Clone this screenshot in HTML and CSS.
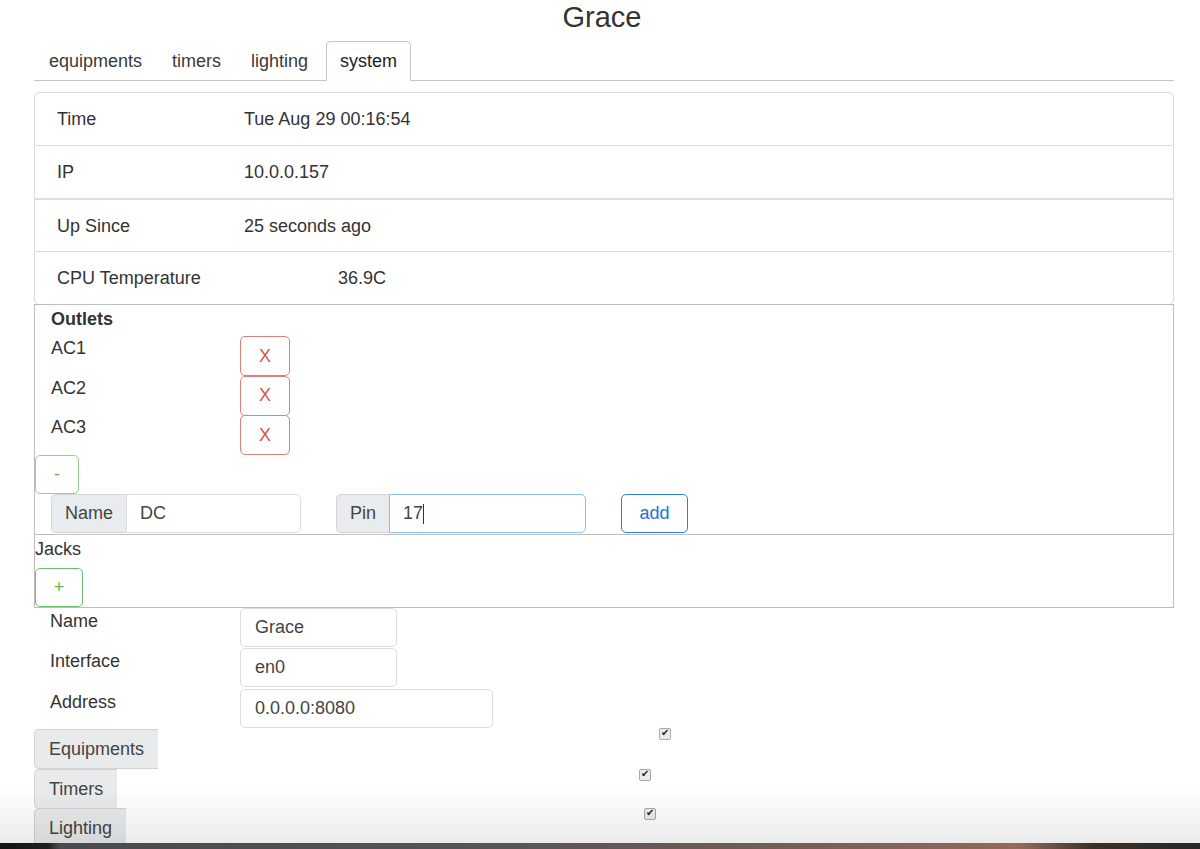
FILE: index.html
```html
<!DOCTYPE html>
<html lang="en">
<head>
    <meta charset="UTF-8">
    <meta name="viewport" content="width=device-width, initial-scale=1.0">
    <title>Grace</title>
    <link rel="stylesheet" href="styles.css">
</head>
<body>
    <h1 class="title">Grace</h1>
    <div class="page">
        <ul class="tabs">
            <li class="tab">equipments</li>
            <li class="tab">timers</li>
            <li class="tab">lighting</li>
            <li class="tab active">system</li>
        </ul>

        <div class="info-card">
            <div class="info-row"><span class="info-label">Time</span><span>Tue Aug 29 00:16:54</span></div>
            <div class="info-row"><span class="info-label">IP</span><span>10.0.0.157</span></div>
            <div class="info-row split"><span class="info-label">Up Since</span><span>25 seconds ago</span></div>
            <div class="info-row"><span class="info-label">CPU Temperature</span><span class="temp">36.9C</span></div>
        </div>

        <div class="box">
            <div class="box-title bold">Outlets</div>
            <div class="outlet"><span class="outlet-name">AC1</span><button class="btn btn-red">X</button></div>
            <div class="outlet"><span class="outlet-name">AC2</span><button class="btn btn-red">X</button></div>
            <div class="outlet"><span class="outlet-name">AC3</span><button class="btn btn-red">X</button></div>
            <button class="btn btn-green btn-minus">-</button>
            <div class="new-outlet">
                <div class="input-group name-group">
                    <span class="addon">Name</span>
                    <input class="group-input" type="text" value="DC">
                </div>
                <div class="input-group pin-group">
                    <span class="addon">Pin</span>
                    <span class="caret-wrap">
                        <input class="group-input focused" type="text" value="17">
                        <span class="caret"></span>
                    </span>
                </div>
                <button class="btn btn-blue">add</button>
            </div>
        </div>

        <div class="box jacks">
            <div class="box-title">Jacks</div>
            <button class="btn btn-green btn-plus">+</button>
        </div>

        <div class="config">
            <div class="config-row">
                <label class="config-label">Name</label>
                <input class="field short" type="text" value="Grace">
            </div>
            <div class="config-row">
                <label class="config-label">Interface</label>
                <input class="field short" type="text" value="en0">
            </div>
            <div class="config-row">
                <label class="config-label">Address</label>
                <input class="field long" type="text" value="0.0.0.0:8080">
            </div>
        </div>

        <div class="toggles">
            <div class="toggle-row">
                <span class="toggle-btn">Equipments</span>
                <input class="check chk-equip" type="checkbox" checked>
            </div>
            <div class="toggle-row">
                <span class="toggle-btn">Timers</span>
                <input class="check chk-timers" type="checkbox" checked>
            </div>
            <div class="toggle-row">
                <span class="toggle-btn">Lighting</span>
                <input class="check chk-light" type="checkbox" checked>
            </div>
        </div>
    </div>

    <div class="window-edge">
        <div class="shade"></div>
        <div class="desktop"></div>
    </div>
</body>
</html>
```

FILE: styles.css
```css
* {
    box-sizing: border-box;
}

body {
    margin: 0;
    font-family: "Liberation Sans", Arial, sans-serif;
    font-size: 18px;
    color: #333;
    background: #fff;
    overflow: hidden;
    height: 849px;
}

.title {
    margin: 0 0 7px;
    padding-left: 4px;
    text-align: center;
    font-size: 29px;
    font-weight: normal;
    line-height: 34px;
    color: #333;
}

.page {
    width: 1140px;
    margin-left: 34px;
}

/* tabs */
.tabs {
    display: flex;
    list-style: none;
    margin: 0;
    padding: 0;
    border-bottom: 1px solid #c4c4c4;
}

.tab {
    padding: 0 14px;
    line-height: 38px;
    border: 1px solid transparent;
    border-radius: 5px 5px 0 0;
    margin-bottom: -1px;
    color: #3a3a3a;
}

.tab.active {
    margin-left: 3px;
    padding: 0 13px;
    border-color: #c4c4c4 #c4c4c4 #fff;
    background: #fff;
    color: #222;
}

/* system info */
.info-card {
    margin-top: 11px;
    border: 1px solid #ddd;
    border-radius: 5px;
}

.info-row {
    display: flex;
    padding: 14px 22px 12px;
    line-height: 25.75px;
    border-top: 1px solid #ddd;
}

.info-row:first-child {
    border-top: none;
}

.info-row.split {
    border-top: 2px solid #ddd;
}

.info-label {
    width: 187px;
}

.temp {
    padding-left: 94px;
}

/* outlets / jacks */
.box {
    border: 1px solid #bdbdbd;
    margin-top: -1px;
}

.box-title {
    line-height: 28px;
    padding-left: 16px;
    margin-bottom: 3px;
}

.bold {
    font-weight: bold;
}

.outlet {
    display: flex;
    align-items: flex-start;
    padding-left: 16px;
}

.outlet-name {
    width: 189px;
    line-height: 24px;
}

.btn {
    font-family: "Liberation Sans", Arial, sans-serif;
    font-size: 18px;
    background: #fff;
    border: 1px solid #ccc;
    border-radius: 5px;
    padding: 0;
    cursor: pointer;
}

.btn-red {
    width: 50px;
    height: 40px;
    color: #d9534f;
    border-color: #e07c79;
    margin-bottom: -0.5px;
}

.btn-green {
    color: #5cb85c;
    border-color: #8fcf8f;
}

.btn-minus {
    display: block;
    width: 44px;
    height: 39px;
}

.btn-plus {
    display: block;
    width: 48px;
    height: 39px;
    border-color: #6cc06c;
}

.btn-blue {
    width: 67px;
    height: 39px;
    color: #1f72d8;
    border-color: #2f7fdc;
    margin-left: 35px;
}

.new-outlet {
    display: flex;
    align-items: center;
    padding-left: 16px;
    margin-bottom: 1px;
}

.input-group {
    display: flex;
    height: 39px;
}

.pin-group {
    margin-left: 35px;
}

.addon {
    display: flex;
    align-items: center;
    padding: 0 13px;
    background: #e9ecef;
    border: 1px solid #d4d4d4;
    border-right: none;
    border-radius: 5px 0 0 5px;
    color: #444;
}

.group-input {
    height: 39px;
    font-family: "Liberation Sans", Arial, sans-serif;
    font-size: 18px;
    color: #444;
    padding: 0 13px;
    border: 1px solid #ddd;
    border-radius: 0 5px 5px 0;
    outline: none;
}

.name-group .group-input {
    width: 175px;
}

.caret-wrap {
    position: relative;
    display: block;
}

.group-input.focused {
    width: 197px;
    border-color: #8cbff0;
}

.caret {
    position: absolute;
    left: 34px;
    top: 10px;
    width: 1px;
    height: 20px;
    background: #333;
}

.jacks .box-title {
    padding-left: 0;
    line-height: 29px;
    margin-bottom: 4px;
}

/* config form */
.config {
    padding-left: 16px;
}

.config-row {
    display: flex;
    align-items: flex-start;
    margin-bottom: 1.5px;
}

.config-label {
    width: 190px;
    line-height: 26px;
}

.field {
    height: 39px;
    font-family: "Liberation Sans", Arial, sans-serif;
    font-size: 18px;
    color: #444;
    padding: 0 14px;
    border: 1px solid #ddd;
    border-radius: 5px;
    outline: none;
}

.field.short {
    width: 157px;
}

.field.long {
    width: 253px;
}

/* section toggles */
.toggle-row {
    display: flex;
    align-items: flex-start;
    height: 39.5px;
}

.toggle-btn {
    display: block;
    height: 40px;
    line-height: 38px;
    padding: 0 14px;
    background: #e9eaeb;
    border: 1px solid #d2d2d2;
    border-right: none;
    border-radius: 5px 0 0 5px;
    color: #444;
}

.check {
    appearance: none;
    -webkit-appearance: none;
    width: 12px;
    height: 12px;
    margin: 0;
    border: 1px solid #a8a8a8;
    border-radius: 2px;
    background: #ececec;
    position: relative;
}

.check:checked::after {
    content: "\2714";
    position: absolute;
    left: 1px;
    top: -2px;
    font-size: 10px;
    color: #222;
}

.chk-equip {
    margin-left: 501px;
    margin-top: -1px;
}

.chk-timers {
    margin-left: 522px;
    margin-top: 0;
}

.chk-light {
    margin-left: 518px;
    margin-top: 0;
}

/* bottom edge of the captured window */
.window-edge {
    position: fixed;
    left: 0;
    right: 0;
    bottom: 0;
    pointer-events: none;
}

.shade {
    height: 54px;
    background: linear-gradient(to bottom, rgba(0, 0, 0, 0), rgba(0, 0, 0, 0.08));
}

.desktop {
    height: 6px;
    background: linear-gradient(to right, #141414 0%, #1f1f1f 4%, #4a4a4e 5%, #525257 35%, #6e5a55 60%, #94695a 85%, #3c3129 91%, #2a2624 100%);
}
```
